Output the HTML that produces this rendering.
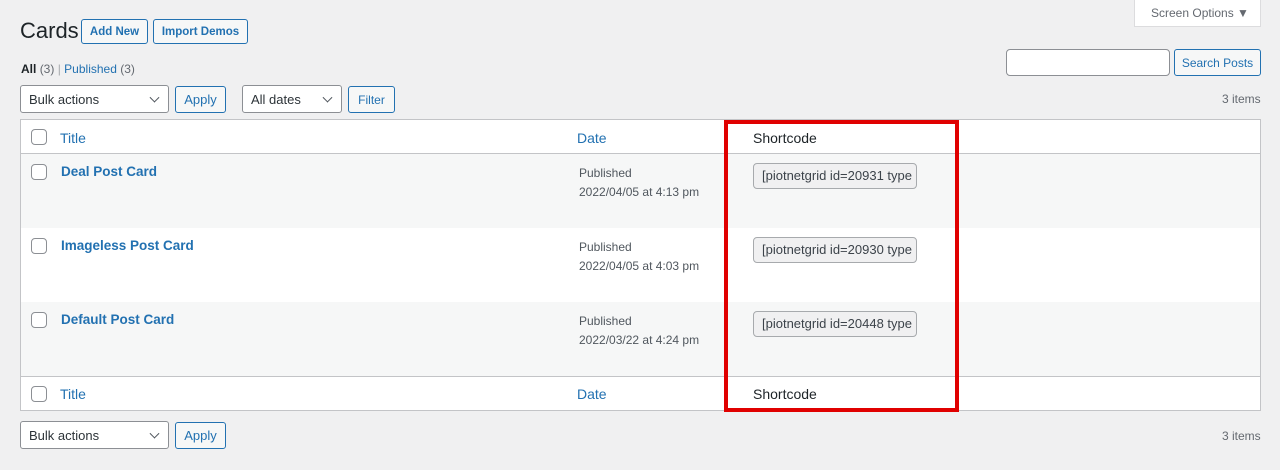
<!DOCTYPE html>
<html><head><meta charset="utf-8"><style>
*{box-sizing:border-box;margin:0;padding:0}
body{width:1280px;height:470px;background:#f0f0f1;font-family:"Liberation Sans",sans-serif;font-size:13px;color:#3c434a;position:relative;overflow:hidden}
.a{position:absolute}
.btn{position:absolute;border:1px solid #2271b1;color:#2271b1;background:#f6f7f7;border-radius:3px;font-size:12px;display:flex;align-items:center;justify-content:center}
.btn2{position:absolute;border:1px solid #8c8f94;background:#fff;border-radius:3px;font-size:13px;color:#2c3338;padding-left:8px;display:flex;align-items:center}
.sel:after{content:"";position:absolute;right:10px;top:50%;width:6px;height:6px;border-right:1.5px solid #50575e;border-bottom:1.5px solid #50575e;transform:translateY(-70%) rotate(45deg)}
.cb{position:absolute;width:16px;height:16px;border:1px solid #8c8f94;border-radius:4px;background:#fff}
.link{color:#2271b1}
.t{position:absolute;font-size:13px}
.sc{position:absolute;left:753px;width:164px;height:26px;border:1px solid #a7aaad;border-radius:4px;background:#f0f0f1;font-size:13px;color:#3c434a;padding-left:8px;line-height:24px;white-space:nowrap;overflow:hidden}
</style></head><body>
<div class="a" style="left:1134px;top:0;width:127px;height:27px;background:#fff;border:1px solid #dcdcde;border-top:none;font-size:12px;color:#646970;padding:6px 0 0 16px">Screen Options ▼</div>
<div class="a" style="left:20px;top:18px;font-size:22px;color:#1d2327">Cards</div>
<div class="btn" style="left:81px;top:19px;width:67px;height:25px;font-weight:bold;font-size:11.5px">Add New</div>
<div class="btn" style="left:153px;top:19px;width:95px;height:25px;font-weight:bold;font-size:11.5px">Import Demos</div>
<div class="a" style="left:21px;top:62px;font-size:12px"><b style="color:#1d2327">All</b> <span style="color:#646970">(3)</span> <span style="color:#a7aaad">|</span> <span class="link">Published</span> <span style="color:#646970">(3)</span></div>
<div class="a" style="left:1006px;top:49px;width:164px;height:27px;background:#fff;border:1px solid #8c8f94;border-radius:4px"></div>
<div class="btn" style="left:1174px;top:49px;width:87px;height:27px">Search Posts</div>
<div class="btn2 sel" style="left:20px;top:85px;width:149px;height:28px">Bulk actions</div>
<div class="btn" style="left:175px;top:86px;width:51px;height:27px;font-size:13px">Apply</div>
<div class="btn2 sel" style="left:242px;top:85px;width:100px;height:28px">All dates</div>
<div class="btn" style="left:348px;top:86px;width:47px;height:27px">Filter</div>
<div class="t" style="left:1222px;top:92px;font-size:12px;color:#646970">3 items</div>

<div class="a" style="left:20px;top:119px;width:1241px;height:292px;background:#fff;border:1px solid #c3c4c7"></div>
<div class="a" style="left:21px;top:153px;width:1239px;height:1px;background:#c3c4c7"></div>
<div class="a" style="left:21px;top:154px;width:1239px;height:74px;background:#f6f7f7"></div>
<div class="a" style="left:21px;top:302px;width:1239px;height:74px;background:#f6f7f7"></div>
<div class="a" style="left:21px;top:376px;width:1239px;height:1px;background:#c3c4c7"></div>

<div class="cb" style="left:31px;top:129px"></div>
<div class="t link" style="left:60px;top:130px;font-size:14px">Title</div>
<div class="t link" style="left:577px;top:130px;font-size:14px">Date</div>
<div class="t" style="left:753px;top:130px;font-size:14px;color:#1d2327">Shortcode</div>

<div class="cb" style="left:31px;top:164px"></div>
<div class="t link" style="left:61px;top:164px;font-size:13.5px;font-weight:bold">Deal Post Card</div>
<div class="t" style="left:579px;top:164px;font-size:12px;line-height:19px;color:#50575e">Published<br>2022/04/05 at 4:13 pm</div>
<div class="sc" style="top:163px">[piotnetgrid id=20931 type</div>

<div class="cb" style="left:31px;top:238px"></div>
<div class="t link" style="left:61px;top:238px;font-size:13.5px;font-weight:bold">Imageless Post Card</div>
<div class="t" style="left:579px;top:238px;font-size:12px;line-height:19px;color:#50575e">Published<br>2022/04/05 at 4:03 pm</div>
<div class="sc" style="top:237px">[piotnetgrid id=20930 type</div>

<div class="cb" style="left:31px;top:312px"></div>
<div class="t link" style="left:61px;top:312px;font-size:13.5px;font-weight:bold">Default Post Card</div>
<div class="t" style="left:579px;top:312px;font-size:12px;line-height:19px;color:#50575e">Published<br>2022/03/22 at 4:24 pm</div>
<div class="sc" style="top:311px">[piotnetgrid id=20448 type</div>

<div class="cb" style="left:31px;top:386px"></div>
<div class="t link" style="left:60px;top:386px;font-size:14px">Title</div>
<div class="t link" style="left:577px;top:386px;font-size:14px">Date</div>
<div class="t" style="left:753px;top:386px;font-size:14px;color:#1d2327">Shortcode</div>

<div class="a" style="left:724px;top:120px;width:235px;height:292px;border:4px solid #e00000"></div>

<div class="btn2 sel" style="left:20px;top:421px;width:149px;height:28px">Bulk actions</div>
<div class="btn" style="left:175px;top:422px;width:51px;height:27px;font-size:13px">Apply</div>
<div class="t" style="left:1222px;top:429px;font-size:12px;color:#646970">3 items</div>
</body></html>
